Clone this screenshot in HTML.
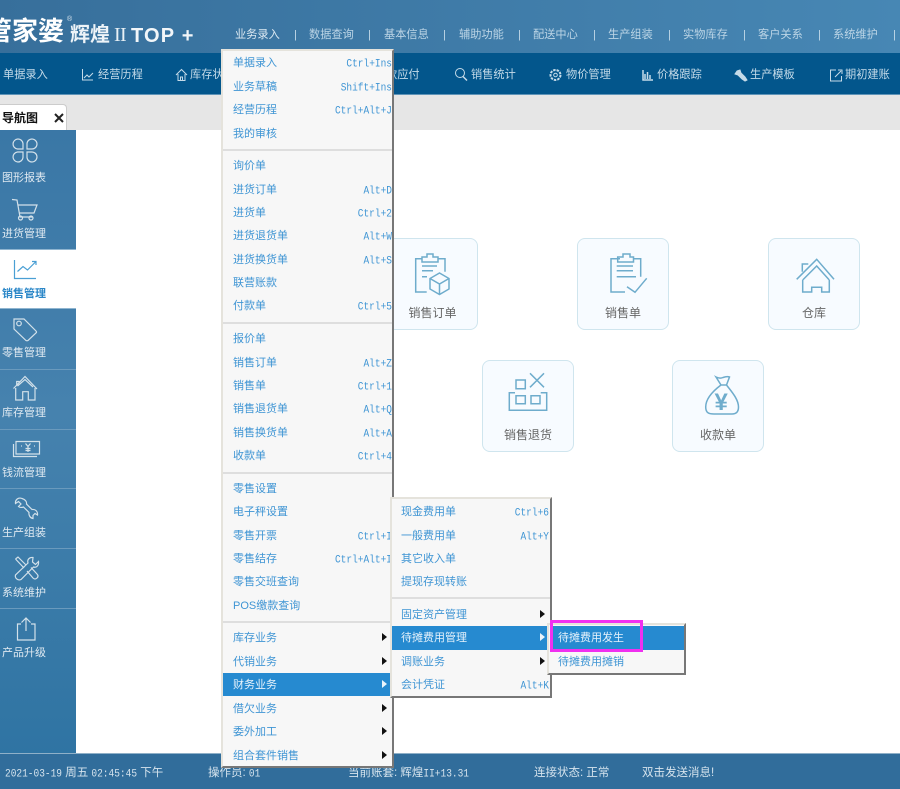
<!DOCTYPE html>
<html lang="zh"><head><meta charset="utf-8"><title>管家婆</title>
<style>
html,body{margin:0;padding:0;width:900px;height:789px;overflow:hidden;background:#fff}
body{font:11px/16px "Liberation Sans","WenQuanYi Zen Hei","Noto Sans CJK SC",sans-serif}
#p{position:relative;width:900px;height:789px;overflow:hidden;filter:blur(.3px)}
.a{position:absolute;white-space:nowrap}
#hd{left:0;top:0;width:900px;height:53px;background:linear-gradient(90deg,#376f9b,#4787b4)}
#nv{left:0;top:53px;width:900px;height:42px;background:#03568c;border-bottom:1px solid #5f94b8;box-sizing:border-box}
#tb{left:0;top:95px;width:900px;height:35px;background:#e6e6e6}
#tab{left:-2px;top:104px;width:69px;height:26px;background:#fff;border:1px solid #ccc;border-bottom:0;border-radius:0 4px 0 0;box-sizing:border-box}
#sd{left:0;top:130px;width:76px;height:623px;background:linear-gradient(180deg,#3a77a6 0,#4682ae 45%,#2f74a3 100%)}
#st{left:0;top:753px;width:900px;height:36px;background:#316d9b;border-top:1px solid #8fb0c8;box-sizing:border-box}
.t{top:27px;color:#bcd5e6;font-size:11.2px}.s{top:27px;color:#c5dbea}
.n{top:67px;color:#c5dbe9;font-size:11.2px}
.l{left:2px;color:#dfe9f1}
.c{width:92px;height:92px;box-sizing:border-box;background:#f7fbff;border:1.5px solid #cfe5ee;border-radius:8px;color:#666;text-align:center;padding-top:66px;font-size:12px}
.m{background:#f7f7f7;border:2px solid;border-color:#e5e3dc #777 #777 #e5e3dc;box-sizing:border-box}
.i{color:#3f95d4;margin-top:1px}
.k{color:#3f95d4;font:9.5px/16px "Liberation Mono",monospace;text-align:right;margin-top:1.500px;transform:scaleY(1.150)}
.h{background:#268ad0}
.w{color:#e6f2fb}
.sp{height:2px;background:#dedede}
.ar{width:0;height:0;border-left:5px solid #111;border-top:4px solid transparent;border-bottom:4px solid transparent}
.b{color:#d5e3ed;top:765px;font-size:11.5px}
.b i{font:normal 9.5px/16px "Liberation Mono",monospace;display:inline-block;transform:scaleY(1.200)}
</style></head><body><div id="p">
<div class="a" id="hd"></div><div class="a" id="nv"></div><div class="a" id="tb"></div>
<div class="a" style="left:-14px;top:15px;font:bold 26px/30px 'Noto Sans CJK SC',sans-serif;color:#fff">管家婆</div>
<div class="a" style="left:67px;top:16px;font:7px/8px 'Liberation Sans',sans-serif;color:#dbe7ef">®</div>
<div class="a" style="left:70px;top:21px;font:bold 20px/24px 'Noto Sans CJK SC',sans-serif;color:#eef4f8">辉煌</div>
<div class="a" style="left:114px;top:23px;font:20px/25px 'Liberation Serif',serif;color:#e8f0f5;letter-spacing:-.6px">II</div>
<div class="a" style="left:131px;top:23px;font:bold 20px/26px 'Liberation Sans',sans-serif;color:#f2f6f9;letter-spacing:1.200px">TOP +</div>
<span class="a t" style="left:235px;color:#dce9f2">业务录入</span><span class="a s" style="left:294px">|</span>
<span class="a t" style="left:309px">数据查询</span><span class="a s" style="left:368px">|</span>
<span class="a t" style="left:384px">基本信息</span><span class="a s" style="left:443px">|</span>
<span class="a t" style="left:459px">辅助功能</span><span class="a s" style="left:518px">|</span>
<span class="a t" style="left:533px">配送中心</span><span class="a s" style="left:593px">|</span>
<span class="a t" style="left:608px">生产组装</span><span class="a s" style="left:668px">|</span>
<span class="a t" style="left:683px">实物库存</span><span class="a s" style="left:743px">|</span>
<span class="a t" style="left:758px">客户关系</span><span class="a s" style="left:818px">|</span>
<span class="a t" style="left:833px">系统维护</span><span class="a s" style="left:893px">|</span>
<span class="a n" style="left:3px">单据录入</span><span class="a n" style="left:98px">经营历程</span><span class="a n" style="left:190px">库存状</span><span class="a n" style="left:386px">款应付</span><span class="a n" style="left:471px">销售统计</span><span class="a n" style="left:566px">物价管理</span><span class="a n" style="left:657px">价格跟踪</span><span class="a n" style="left:750px">生产模板</span><span class="a n" style="left:845px">期初建账</span>
<svg class="a" style="left:0;top:53px" width="900" height="42" fill="none" stroke="#c5dbe9" stroke-width="1">
<path d="M82.500 16V27H93M84 25l3-3 2 2 4-4"/>
<path d="M176 22l5.500-5.500L187 22M178 21v6.500h7V21M180.500 27v-3h2v3"/>
<circle cx="460" cy="20" r="4.500"/><path d="M463 23.500l4 4" stroke-width="1.500"/>
<circle cx="555.500" cy="22" r="5" stroke-width="2" stroke-dasharray="2.500 1"/><circle cx="555.500" cy="22" r="1.800"/>
<path d="M643 17v10h10M645 26v-5M647.500 26v-7M650 26v-4" stroke-width="1.500"/>
<path d="M737 18l3-1 1 3 4 4 2 3-2 1-3-2-4-4-3-1z" fill="#c5dbe9"/>
<path d="M836 17h-5.500v11h11v-5M835 24l6-6M838 17h4v4"/></svg>
<div class="a" id="tab"></div>
<div class="a" style="left:2px;top:110px;font-weight:bold;color:#111;font-size:12px">导航图</div>
<svg class="a" style="left:54px;top:113px" width="10" height="10" stroke="#222" stroke-width="2"><path d="M1 1l8 8M9 1L1 9"/></svg>
<div class="a" id="sd"></div>
<div class="a" style="left:0;top:249px;width:76px;height:60px;background:#fff;border-top:1px solid #8fb5d0;border-bottom:1px solid #8fb5d0;box-sizing:border-box"></div>
<div class="a" style="left:0;top:369px;width:76px;height:1px;background:#6a9abd"></div>
<div class="a" style="left:0;top:429px;width:76px;height:1px;background:#6a9abd"></div>
<div class="a" style="left:0;top:488px;width:76px;height:1px;background:#6a9abd"></div>
<div class="a" style="left:0;top:548px;width:76px;height:1px;background:#6a9abd"></div>
<div class="a" style="left:0;top:608px;width:76px;height:1px;background:#6a9abd"></div>
<span class="a l" style="top:170px">图形报表</span><span class="a l" style="top:226px">进货管理</span>
<span class="a l" style="top:286px;color:#2b87c8;font-weight:bold">销售管理</span>
<span class="a l" style="top:345px">零售管理</span><span class="a l" style="top:405px">库存管理</span><span class="a l" style="top:465px">钱流管理</span><span class="a l" style="top:525px">生产组装</span><span class="a l" style="top:585px">系统维护</span><span class="a l" style="top:645px">产品升级</span>
<svg class="a" style="left:0;top:130px" width="76" height="623" viewBox="0 130 76 623" fill="none" stroke="#d3e1ea" stroke-width="1.200">
<path d="M23 149H17.500A5 5 0 1 1 23 143.500ZM27 149H31.500A5 5 0 1 0 27 143.500ZM23 152H17.500A5 5 0 1 0 23 157.500ZM27 152H31.500A5 5 0 1 1 27 157.500Z"/>
<path d="M12 199.500l5 .5 3 17h13M17.500 205H37l-3 8H19"/><circle cx="20.500" cy="218" r="2"/><circle cx="31" cy="218" r="2"/>
<path stroke="#4a9fd4" d="M14.500 260V278.500H36M17.500 271.500l5.500-5 4.500 3.500 8.500-8.500M32 261.500h4v3.500"/>
<path d="M14 319H24L36 331Q37 332 36 333L28 340.500Q27 341 26 340.500L14 329Z"/><circle cx="19" cy="323.500" r="2.300"/>
<path d="M13.500 388.500L25 376.500 37 389M16.700 385V381.500H19.500M15.700 388V400H22.700V391.700H28.300V400H35V388M17.500 386L25 379.500 33 387"/>
<path d="M16 441.500h23.500v12.500H16zM13.500 444v12.500H37"/><path d="M21 446h.8M34 446h.8" stroke-width="1.500"/><path d="M25.500 443.500l2.500 3 2.500-3M28 446.500v5.500M25.500 448.500h5M25.500 450.500h5"/>
<path d="M22 498.500C18 497 15 500 15.500 503.500L18.500 501.500 21 504 18.500 506.500C20 508 22 507.500 23.500 507L29 512.500C28.500 515 30 518 33 518.500L33 515.500 35 513.500 37.500 515C38 511.500 35.500 509 32 509.500L26.500 504C27 501.500 25 499.500 22 498.500Z"/>
<path d="M33 557.500C29 557 27 560 28 563L15.500 575C14.500 578 18 581 21 579.500L33.500 567C36.500 568 39 565.500 38.500 561.500L35.500 564.500 32.500 562ZM15.500 559L18 557 26 565M15.500 559L24 568M27 571L33 578Q35 580 37 578 39 576 37 574L31 567.500"/>
<path d="M21 624H17.500V640H35V624H31M26 631V618M21.500 622.500L26 618l4.500 4.500"/>
</svg>
<div class="a c" style="left:387px;top:238px;width:91px">销售订单</div>
<div class="a c" style="left:577px;top:238px">销售单</div>
<div class="a c" style="left:768px;top:238px">仓库</div>
<div class="a c" style="left:482px;top:360px">销售退货</div>
<div class="a c" style="left:672px;top:360px">收款单</div>
<svg class="a" style="left:0;top:0" width="900" height="789" fill="none" stroke="#6eaccc" stroke-width="1.500">
<path d="M422 258.700H415.700V292H426.700M438 258.700H445V271.700M422 262V257H427V254H433V257H438V262ZM422 266H437M422 270.700H433M422 276.700H427"/>
<path d="M439.500 273L449 278.500V289L439.500 294.500 430 289V278.500ZM430 278.500L439.500 284 449 278.500M439.500 284V294.500"/>
<path d="M620 258.700H611V292H625M633 258.700H640.700V276.700M617.700 262V257H623V254H630V257H633.500V262ZM616.700 266H633M616.700 270.700H633M616.700 276.700H636M627 286.700L635 292.300 646.700 278.300"/>
<path d="M516 380H525.300V388.700H516ZM530 373.300L544 387.300M544 373.300L530 387.300M515 392.700H509.300V410.300H546.700V392.700H540.700M516 395.700H525.300V403.700H516ZM531 395.700H540V403.700H531Z"/>
<path d="M796.700 279.300L816.700 259.300 834 279.300M802.300 271.700V264H808.300M802.700 280V292H811.700V287.300H821.700V292H829.300V280M802.700 280L816.700 266 829.300 280"/>
<path d="M716 377Q720 379 723 377.500 727 376 729.500 377L726.500 385H721ZM721 385C713 391 705.700 399 705.700 407 705.700 413 709 414 714 414H732C737 414 738.500 411 738.500 407 738.500 399 731 391 726.500 385"/>
<text x="714.500" y="410" style="font:bold 24px 'Liberation Sans',sans-serif" fill="#6eaccc" stroke="none">¥</text>
</svg>
<div class="a" id="st"></div>
<span class="a b" style="left:5px"><i>2021-03-19</i> 周五 <i>02:45:45</i> 下午</span>
<span class="a b" style="left:208px">操作员: <i>01</i></span>
<span class="a b" style="left:348px">当前账套: 辉煌<i>II+13.31</i></span>
<span class="a b" style="left:534px">连接状态: 正常</span>
<span class="a b" style="left:642px">双击发送消息!</span>
<div class="a m" style="left:221px;top:49px;width:173px;height:719px"></div>
<div class="a sp" style="left:223px;top:149px;width:169px"></div><div class="a sp" style="left:223px;top:322px;width:169px"></div><div class="a sp" style="left:223px;top:472px;width:169px"></div><div class="a sp" style="left:223px;top:621px;width:169px"></div>
<div class="a h" style="left:223px;top:673px;width:167px;height:23px"></div>
<span class="a i" style="left:233px;top:54px">单据录入</span><span class="a k" style="right:508px;top:54px">Ctrl+Ins</span>
<span class="a i" style="left:233px;top:78px">业务草稿</span><span class="a k" style="right:508px;top:78px">Shift+Ins</span>
<span class="a i" style="left:233px;top:101px">经营历程</span><span class="a k" style="right:508px;top:101px">Ctrl+Alt+J</span>
<span class="a i" style="left:233px;top:125px">我的审核</span>
<span class="a i" style="left:233px;top:157px">询价单</span>
<span class="a i" style="left:233px;top:181px">进货订单</span><span class="a k" style="right:508px;top:181px">Alt+D</span>
<span class="a i" style="left:233px;top:204px">进货单</span><span class="a k" style="right:508px;top:204px">Ctrl+2</span>
<span class="a i" style="left:233px;top:227px">进货退货单</span><span class="a k" style="right:508px;top:227px">Alt+W</span>
<span class="a i" style="left:233px;top:251px">进货换货单</span><span class="a k" style="right:508px;top:251px">Alt+S</span>
<span class="a i" style="left:233px;top:274px">联营账款</span>
<span class="a i" style="left:233px;top:297px">付款单</span><span class="a k" style="right:508px;top:297px">Ctrl+5</span>
<span class="a i" style="left:233px;top:330px">报价单</span>
<span class="a i" style="left:233px;top:354px">销售订单</span><span class="a k" style="right:508px;top:354px">Alt+Z</span>
<span class="a i" style="left:233px;top:377px">销售单</span><span class="a k" style="right:508px;top:377px">Ctrl+1</span>
<span class="a i" style="left:233px;top:400px">销售退货单</span><span class="a k" style="right:508px;top:400px">Alt+Q</span>
<span class="a i" style="left:233px;top:424px">销售换货单</span><span class="a k" style="right:508px;top:424px">Alt+A</span>
<span class="a i" style="left:233px;top:447px">收款单</span><span class="a k" style="right:508px;top:447px">Ctrl+4</span>
<span class="a i" style="left:233px;top:480px">零售设置</span>
<span class="a i" style="left:233px;top:503px">电子秤设置</span>
<span class="a i" style="left:233px;top:527px">零售开票</span><span class="a k" style="right:508px;top:527px">Ctrl+I</span>
<span class="a i" style="left:233px;top:550px">零售结存</span><span class="a k" style="right:508px;top:550px">Ctrl+Alt+I</span>
<span class="a i" style="left:233px;top:573px">零售交班查询</span>
<span class="a i" style="left:233px;top:597px">POS缴款查询</span>
<span class="a i" style="left:233px;top:629px">库存业务</span><span class="a ar" style="left:382px;top:633px"></span>
<span class="a i" style="left:233px;top:653px">代销业务</span><span class="a ar" style="left:382px;top:657px"></span>
<span class="a i w" style="left:233px;top:676px">财务业务</span><span class="a ar" style="left:382px;top:680px;border-left-color:#eaf4fb"></span>
<span class="a i" style="left:233px;top:700px">借欠业务</span><span class="a ar" style="left:382px;top:704px"></span>
<span class="a i" style="left:233px;top:723px">委外加工</span><span class="a ar" style="left:382px;top:727px"></span>
<span class="a i" style="left:233px;top:747px">组合套件销售</span><span class="a ar" style="left:382px;top:751px"></span>
<div class="a m" style="left:390px;top:497px;width:162px;height:201px"></div>
<div class="a sp" style="left:392px;top:597px;width:158px"></div>
<div class="a h" style="left:392px;top:626px;width:156px;height:24px"></div>
<span class="a i" style="left:401px;top:503px">现金费用单</span><span class="a k" style="right:351px;top:503px">Ctrl+6</span>
<span class="a i" style="left:401px;top:527px">一般费用单</span><span class="a k" style="right:351px;top:527px">Alt+Y</span>
<span class="a i" style="left:401px;top:550px">其它收入单</span>
<span class="a i" style="left:401px;top:573px">提现存现转账</span>
<span class="a i" style="left:401px;top:606px">固定资产管理</span><span class="a ar" style="left:540px;top:610px"></span>
<span class="a i w" style="left:401px;top:629px">待摊费用管理</span><span class="a ar" style="left:540px;top:633px;border-left-color:#eaf4fb"></span>
<span class="a i" style="left:401px;top:653px">调账业务</span><span class="a ar" style="left:540px;top:657px"></span>
<span class="a i" style="left:401px;top:676px">会计凭证</span><span class="a k" style="right:351px;top:676px">Alt+K</span>
<div class="a m" style="left:547px;top:623px;width:139px;height:52px"></div>
<div class="a h" style="left:550px;top:626px;width:134px;height:24px"></div>
<span class="a i w" style="left:558px;top:629px">待摊费用发生</span>
<span class="a i" style="left:558px;top:653px">待摊费用摊销</span>
<div class="a" style="left:550px;top:620px;width:93px;height:32px;border:3px solid #f030f0;box-sizing:border-box"></div>
</div></body></html>
